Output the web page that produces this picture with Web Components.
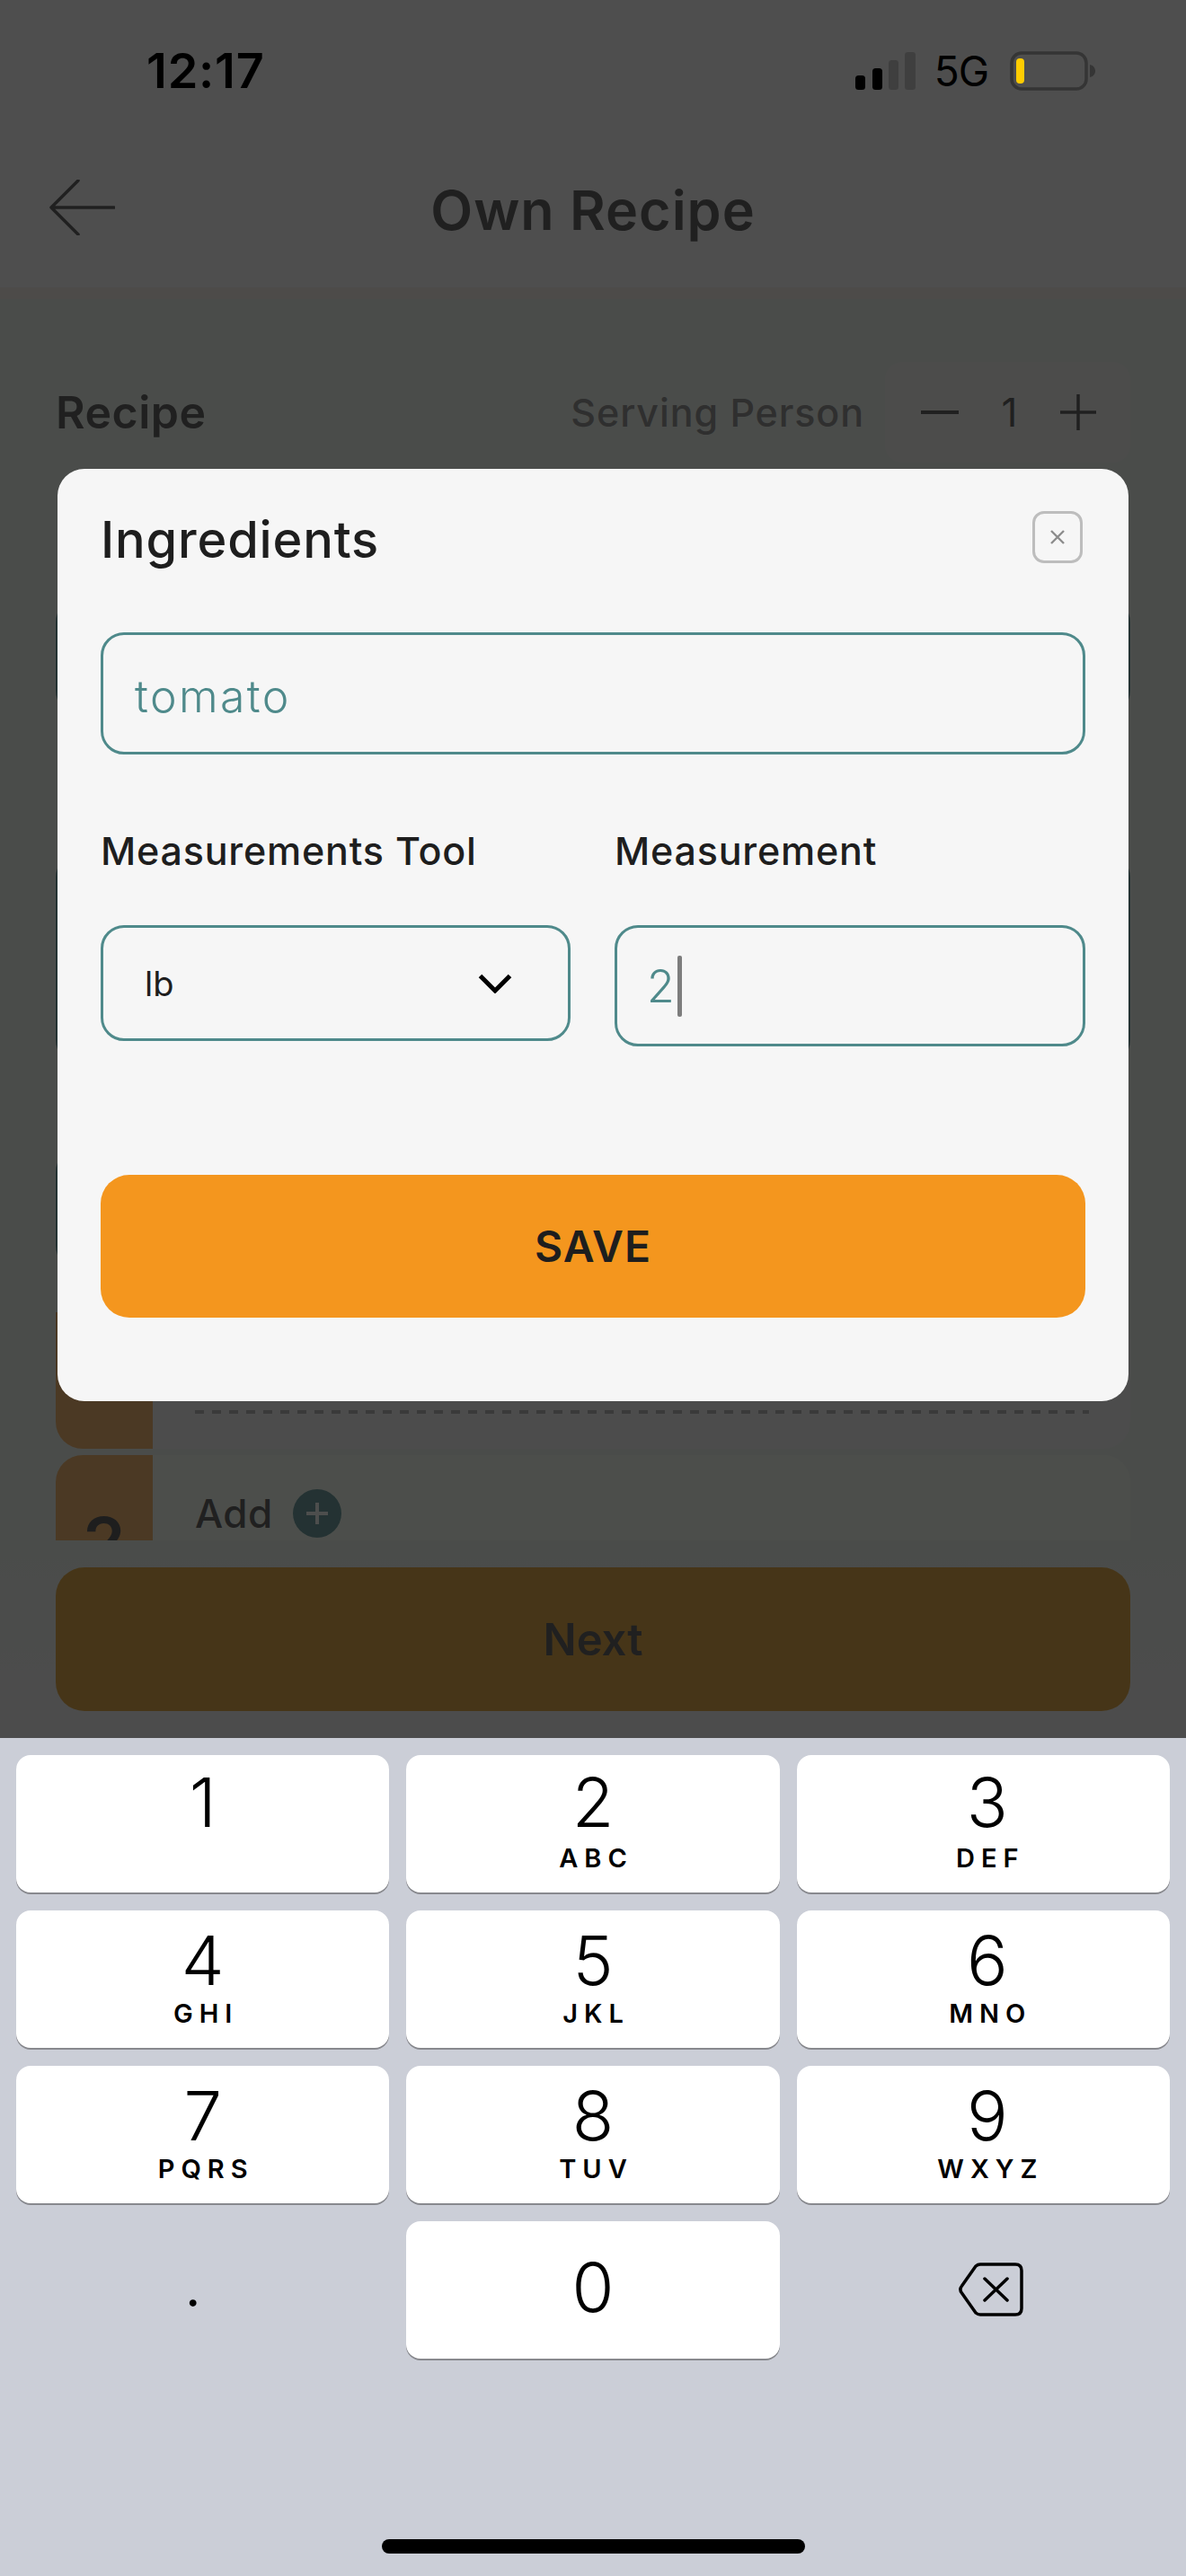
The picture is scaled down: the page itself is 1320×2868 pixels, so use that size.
<!DOCTYPE html>
<html>
<head>
<meta charset="utf-8">
<title>Own Recipe</title>
<style>
  html, body { margin: 0; padding: 0; background: #cbced7; }
</style>
</head>
<body>
<phone-screen>
  <status-bar slot="status"></status-bar>
  <recipe-page slot="page"></recipe-page>
  <ingredient-modal slot="modal"></ingredient-modal>
  <num-keyboard slot="keyboard"></num-keyboard>
</phone-screen>

<script>
const UI_FONT = `Inter, "Liberation Sans", sans-serif`;
const SYS_FONT = `Inter, "Liberation Sans", sans-serif`;

class PhoneScreen extends HTMLElement {
    constructor() {
        super();
        this.attachShadow({ mode: 'open' });
        this.shadowRoot.innerHTML = `
            <style>
                :host { display: flex; flex-direction: column; position: relative; width: 1320px; height: 2868px; overflow: hidden; }
                .top { position: relative; height: 1935px; flex: none; }
                .scrim { position: absolute; inset: 0; background: rgba(22, 22, 22, .756); }
                .status { position: absolute; left: 0; right: 0; top: 0; }
                .modal { position: absolute; left: 64px; top: 522px; }
            </style>
            <div class="top">
                <slot name="page"></slot>
                <div class="scrim"></div>
                <div class="status"><slot name="status"></slot></div>
                <div class="modal"><slot name="modal"></slot></div>
            </div>
            <slot name="keyboard"></slot>
        `;
    }
}

class StatusBar extends HTMLElement {
    constructor() {
        super();
        this.attachShadow({ mode: 'open' });
        this.shadowRoot.innerHTML = `
            <style>
                :host { display: flex; align-items: center; height: 158px; box-sizing: border-box; padding: 0 100px 0 163px; font-family: ${SYS_FONT}; color: #000; }
                .time { font-size: 54px; font-weight: 600; letter-spacing: .8px; line-height: 60px; }
                .right { margin-left: auto; display: flex; align-items: center; gap: 24px; }
                .net { font-size: 46px; font-weight: 400; letter-spacing: -1px; line-height: 50px; margin-left: -3px; }
                svg { display: block; }
            </style>
            <span class="time">12:17</span>
            <div class="right">
                <svg width="68" height="44" viewBox="0 0 68 44">
                    <rect x="1" y="27" width="11" height="16" rx="3.5" fill="#000"/>
                    <rect x="20" y="19" width="11" height="24" rx="3.5" fill="#000"/>
                    <rect x="38" y="10" width="11" height="33" rx="3.5" fill="#3f3f3f"/>
                    <rect x="56" y="1" width="12" height="42" rx="3.5" fill="#3f3f3f"/>
                </svg>
                <span class="net">5G</span>
                <svg width="96" height="44" viewBox="0 0 96 44">
                    <rect x="2" y="2" width="83" height="40" rx="11" fill="none" stroke="#353535" stroke-width="3.5"/>
                    <rect x="7" y="8" width="9" height="28" rx="4" fill="#ffcc00"/>
                    <path d="M89 15 C93 16 95 19 95 22 C95 25 93 28 89 29 Z" fill="#353535"/>
                </svg>
            </div>
        `;
    }
}

class RecipePage extends HTMLElement {
    constructor() {
        super();
        this.attachShadow({ mode: 'open' });
        this.shadowRoot.innerHTML = `
            <style>
                :host { display: flex; flex-direction: column; height: 1935px; background: #f3f3f3; font-family: ${UI_FONT}; color: #404040; }
                header { flex: none; height: 333px; box-sizing: border-box; padding: 145px 54px 0; background: #f8f8f8; border-bottom: 13px solid #f5ece5; display: grid; grid-template-columns: 74px 1fr 74px; align-items: center; }
                header svg { margin-top: -4px; }
                h1 { margin: 0; padding-top: 3px; text-align: center; font-size: 61px; font-weight: 600; letter-spacing: 1px; }
                main { flex: 1; display: flex; flex-direction: column; padding: 70px 62px 30px; min-height: 0; background: linear-gradient(#ebf3eb 1400px, #f3f3f3); }
                .row { flex: none; height: 112px; display: flex; align-items: center; }
                .row b { font-size: 50px; font-weight: 600; letter-spacing: .5px; }
                .serving { margin-left: auto; font-size: 43px; font-weight: 500; color: #7a7a7a; letter-spacing: .9px; }
                .stepper { margin-left: 23px; width: 273px; height: 112px; background: #f3f3ef; display: flex; align-items: center; justify-content: space-between; box-sizing: border-box; padding: 0 38px 0 40px; font-size: 44px; border-radius: 20px; }
                .list { flex: 1; min-height: 0; overflow: hidden; display: flex; flex-direction: column; margin-top: 25px; }
                .field { flex: none; box-sizing: border-box; border: 3px solid #4f8a8b; border-radius: 26px; }
                .f1 { height: 128px; margin-top: 127px; }
                .f2 { height: 233px; margin-top: 156px; }
                .f3 { height: 134px; margin-top: 95px; width: 523px; }
                .card { flex: none; display: flex; background: #f0f0f0; border-radius: 30px; }
                .card.first { height: 152px; margin-top: 48px; }
                .card.second { height: 176px; margin-top: 7px; background: #f3fbef; }
                .tab { flex: none; width: 108px; background: #eda650; border-radius: 30px 0 0 30px; font-size: 76px; font-weight: 600; text-align: center; box-sizing: border-box; padding-top: 50px; color: #383838; }
                .first .tab { border-top-left-radius: 0; }
                .body { flex: 1; display: flex; flex-direction: column; padding: 0 46px 0 47px; }
                .first .body { justify-content: flex-end; padding-bottom: 39px; }
                .dash { height: 4px; background: repeating-linear-gradient(90deg, #a8a8a8 0 10px, transparent 10px 19px); }
                .add { display: flex; align-items: center; gap: 22px; font-size: 44px; font-weight: 500; letter-spacing: .5px; margin-top: 38px; }
                .add i { width: 54px; height: 54px; border-radius: 50%; background: #4f8a8b; display: flex; align-items: center; justify-content: center; }
                .next { flex: none; height: 160px; margin-top: 30px; background: #da961e; border-radius: 32px; display: flex; align-items: center; justify-content: center; font-size: 49px; font-weight: 600; }
                svg { display: block; }
            </style>
            <header>
                <svg width="74" height="62" viewBox="0 0 74 62">
                    <path d="M73 31 H3 M33 1 L3 31 L33 61" fill="none" stroke="#404040" stroke-width="3.5" stroke-linecap="round" stroke-linejoin="round"/>
                </svg>
                <h1>Own Recipe</h1>
            </header>
            <main>
                <div class="row">
                    <b>Recipe</b>
                    <span class="serving">Serving Person</span>
                    <div class="stepper">
                        <svg width="42" height="4" viewBox="0 0 42 4"><rect width="42" height="4" fill="#404040"/></svg>
                        <span>1</span>
                        <svg width="40" height="40" viewBox="0 0 40 40"><path d="M20 0 V40 M0 20 H40" stroke="#404040" stroke-width="3.5"/></svg>
                    </div>
                </div>
                <div class="list">
                    <div class="field f1"></div>
                    <div class="field f2"></div>
                    <div class="field f3"></div>
                    <div class="card first">
                        <div class="tab"></div>
                        <div class="body"><div class="dash"></div></div>
                    </div>
                    <div class="card second">
                        <div class="tab">2</div>
                        <div class="body">
                            <div class="add">Add
                                <i><svg width="28" height="28" viewBox="0 0 28 28"><path d="M14 2 V26 M2 14 H26" stroke="#f6faf6" stroke-width="4"/></svg></i>
                            </div>
                        </div>
                    </div>
                </div>
                <div class="next">Next</div>
            </main>
        `;
    }
}

class FieldBox extends HTMLElement {
    constructor() {
        super();
        this.attachShadow({ mode: 'open' });
        this.shadowRoot.innerHTML = `
            <style>
                :host { display: flex; align-items: center; box-sizing: border-box; border: 3px solid #4f8a8b; border-radius: 26px; color: #4f8a8b; font-size: 50px; font-weight: 300; }
            </style>
            <slot></slot>
        `;
    }
}

class IngredientModal extends HTMLElement {
    constructor() {
        super();
        this.attachShadow({ mode: 'open' });
        this.shadowRoot.innerHTML = `
            <style>
                :host { display: flex; flex-direction: column; width: 1192px; height: 1038px; box-sizing: border-box; padding: 47px 48px 0; background: #f6f6f6; border-radius: 30px; font-family: ${UI_FONT}; color: #1e1e1e; }
                .head { display: flex; align-items: center; justify-content: space-between; height: 58px; }
                h2 { margin: 0; padding-top: 5px; font-size: 56px; font-weight: 500; letter-spacing: .8px; }
                .close { width: 56px; height: 58px; box-sizing: border-box; margin-right: 3px; border: 3px solid #bdbdbd; border-radius: 13px; display: flex; align-items: center; justify-content: center; }
                .name { height: 136px; margin-top: 77px; padding: 5px 0 0 35px; letter-spacing: 2.4px; }
                .labels { display: grid; grid-template-columns: 523px 524px; column-gap: 49px; margin-top: 78px; font-size: 43px; font-weight: 500; letter-spacing: .8px; line-height: 58px; }
                .inputs { display: grid; grid-template-columns: 523px 524px; column-gap: 49px; align-items: start; margin-top: 54px; }
                .select { height: 129px; padding: 0 62px 0 46px; color: #1e1e1e; font-size: 38px; font-weight: 400; justify-content: space-between; }
                .value { height: 135px; padding-left: 33px; }
                .caret { display: inline-block; width: 5px; height: 68px; margin-left: 3px; background: #7d7d7d; border-radius: 2px; }
                .save { flex: none; height: 159px; margin-top: 143px; background: #f4961e; border-radius: 32px; display: flex; align-items: center; justify-content: center; font-size: 48px; font-weight: 600; letter-spacing: 1px; }
            </style>
            <div class="head">
                <h2>Ingredients</h2>
                <div class="close">
                    <svg width="20" height="20" viewBox="0 0 20 20"><path d="M3 3 L17 17 M17 3 L3 17" stroke="#8c8c8c" stroke-width="2.4"/></svg>
                </div>
            </div>
            <field-box class="name">tomato</field-box>
            <div class="labels"><span>Measurements Tool</span><span>Measurement</span></div>
            <div class="inputs">
                <field-box class="select">
                    <span>lb</span>
                    <svg width="38" height="22" viewBox="0 0 38 22"><path d="M2.5 2.5 L19 19 L35.5 2.5" fill="none" stroke="#000" stroke-width="5"/></svg>
                </field-box>
                <field-box class="value"><span>2</span><span class="caret"></span></field-box>
            </div>
            <div class="save">SAVE</div>
        `;
    }
}

class NumKey extends HTMLElement {
    constructor() {
        super();
        this.attachShadow({ mode: 'open' });
    }
    connectedCallback() {
        const digit = this.getAttribute('digit');
        const letters = this.getAttribute('letters') || '';
        this.shadowRoot.innerHTML = `
            <style>
                :host { display: flex; flex-direction: column; align-items: center; height: 153px; box-sizing: border-box; background: #fff; border-radius: 16px; box-shadow: 0 2px 0 #88898e; font-family: ${SYS_FONT}; color: #000; }
                :host([center]) { justify-content: center; }
                :host([shift]) { padding-left: 9px; }
                .d { font-size: 76px; font-weight: 300; line-height: 90px; margin-top: 10px; margin-bottom: -4px; }
                :host([raised]) .d { margin-top: 7px; margin-bottom: -1px; }
                :host([center]) .d { margin: 0 0 8px; }
                .l { font-size: 29px; font-weight: 600; letter-spacing: 7px; margin-right: -7px; line-height: 34px; margin-top: 2px; }
            </style>
            <span class="d">${digit}</span>
            ${letters ? `<span class="l">${letters}</span>` : ''}
        `;
    }
}

class NumKeyboard extends HTMLElement {
    constructor() {
        super();
        this.attachShadow({ mode: 'open' });
        const keys = [['1', ''], ['2', 'ABC'], ['3', 'DEF'], ['4', 'GHI'], ['5', 'JKL'], ['6', 'MNO'], ['7', 'PQRS'], ['8', 'TUV'], ['9', 'WXYZ']];
        this.shadowRoot.innerHTML = `
            <style>
                :host { display: block; flex: 1; background: #cbced7; position: relative; box-sizing: border-box; padding: 19px 18px 0; font-family: ${SYS_FONT}; color: #000; }
                .grid { display: grid; grid-template-columns: repeat(3, 1fr); column-gap: 19px; row-gap: 20px; }
                .plain { height: 153px; display: flex; align-items: center; justify-content: center; }
                .dot { font-size: 50px; font-weight: 600; line-height: 50px; margin-right: 22px; }
                .back { margin-left: 18px; margin-top: -2px; }
                .home { position: absolute; left: 425px; top: 892px; width: 471px; height: 16px; background: #000; border-radius: 8px; }
            </style>
            <div class="grid">
                ${keys.map(([d, l], i) => `<num-key digit="${d}" letters="${l}"${i < 3 ? ' raised' : ''}${i % 3 === 2 ? ' shift' : ''}></num-key>`).join('')}
                <div class="plain"><span class="dot">.</span></div>
                <num-key digit="0" center></num-key>
                <div class="plain">
                    <svg class="back" width="72" height="60" viewBox="0 0 72 60">
                        <path d="M24 2 H63 C67.5 2 70 4.5 70 9 V51 C70 55.5 67.5 58 63 58 H24 C22 58 20.5 57.3 19 56 L3.5 34 C1.5 31.5 1.5 28.5 3.5 26 L19 4 C20.5 2.7 22 2 24 2 Z" fill="none" stroke="#000" stroke-width="3.5" stroke-linejoin="round"/>
                        <path d="M29 18 L54 42 M54 18 L29 42" fill="none" stroke="#000" stroke-width="3.5" stroke-linecap="round"/>
                    </svg>
                </div>
            </div>
            <div class="home"></div>
        `;
    }
}

customElements.define('phone-screen', PhoneScreen);
customElements.define('status-bar', StatusBar);
customElements.define('recipe-page', RecipePage);
customElements.define('field-box', FieldBox);
customElements.define('ingredient-modal', IngredientModal);
customElements.define('num-key', NumKey);
customElements.define('num-keyboard', NumKeyboard);
</script>
</body>
</html>
